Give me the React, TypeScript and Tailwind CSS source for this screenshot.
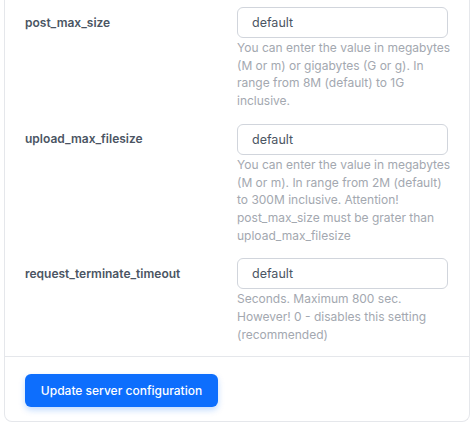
const rows = [
  {
    name: 'post_max_size',
    help: 'You can enter the value in megabytes (M or m) or gigabytes (G or g). In range from 8M (default) to 1G inclusive.',
  },
  {
    name: 'upload_max_filesize',
    help: 'You can enter the value in megabytes (M or m). In range from 2M (default) to 300M inclusive. Attention! post_max_size must be grater than upload_max_filesize',
  },
  {
    name: 'request_terminate_timeout',
    help: 'Seconds. Maximum 800 sec. However! 0 - disables this setting (recommended)',
  },
];

export default function App() {
  return (
    <div className="min-h-screen bg-white px-[4px] font-['Inter',sans-serif]">
      <div className="border-x border-b border-gray-200 rounded-b-[8px] bg-white">
        {/* Settings rows */}
        <div className="px-[20px] pt-[7px] pb-[13px] flex flex-col gap-[14px]">
          {rows.map((row) => (
            <div key={row.name} className="flex">
              <div className="w-[212px] h-[31px] flex items-center text-[12px] font-semibold text-[#4b5563]">
                {row.name}
              </div>
              <div className="w-[211px]">
                <input
                  type="text"
                  defaultValue="default"
                  className="w-full h-[31px] rounded-[6px] border border-gray-300 px-[14px] text-[12.5px] text-[#4b5563] outline-none"
                />
                <p className="mt-[1px] w-[214px] text-[12px] leading-[17.7px] text-[#a3a8b0]">{row.help}</p>
              </div>
            </div>
          ))}
        </div>

        {/* Footer */}
        <div className="border-t border-gray-200 px-[20px] pt-[17px] pb-[14px]">
          <button className="h-[33px] w-[193px] rounded-[6px] bg-[#0d6efd] text-[12px] font-medium text-white shadow-[0_3px_6px_rgba(13,110,253,0.25)]">
            Update server configuration
          </button>
        </div>
      </div>
    </div>
  );
}
